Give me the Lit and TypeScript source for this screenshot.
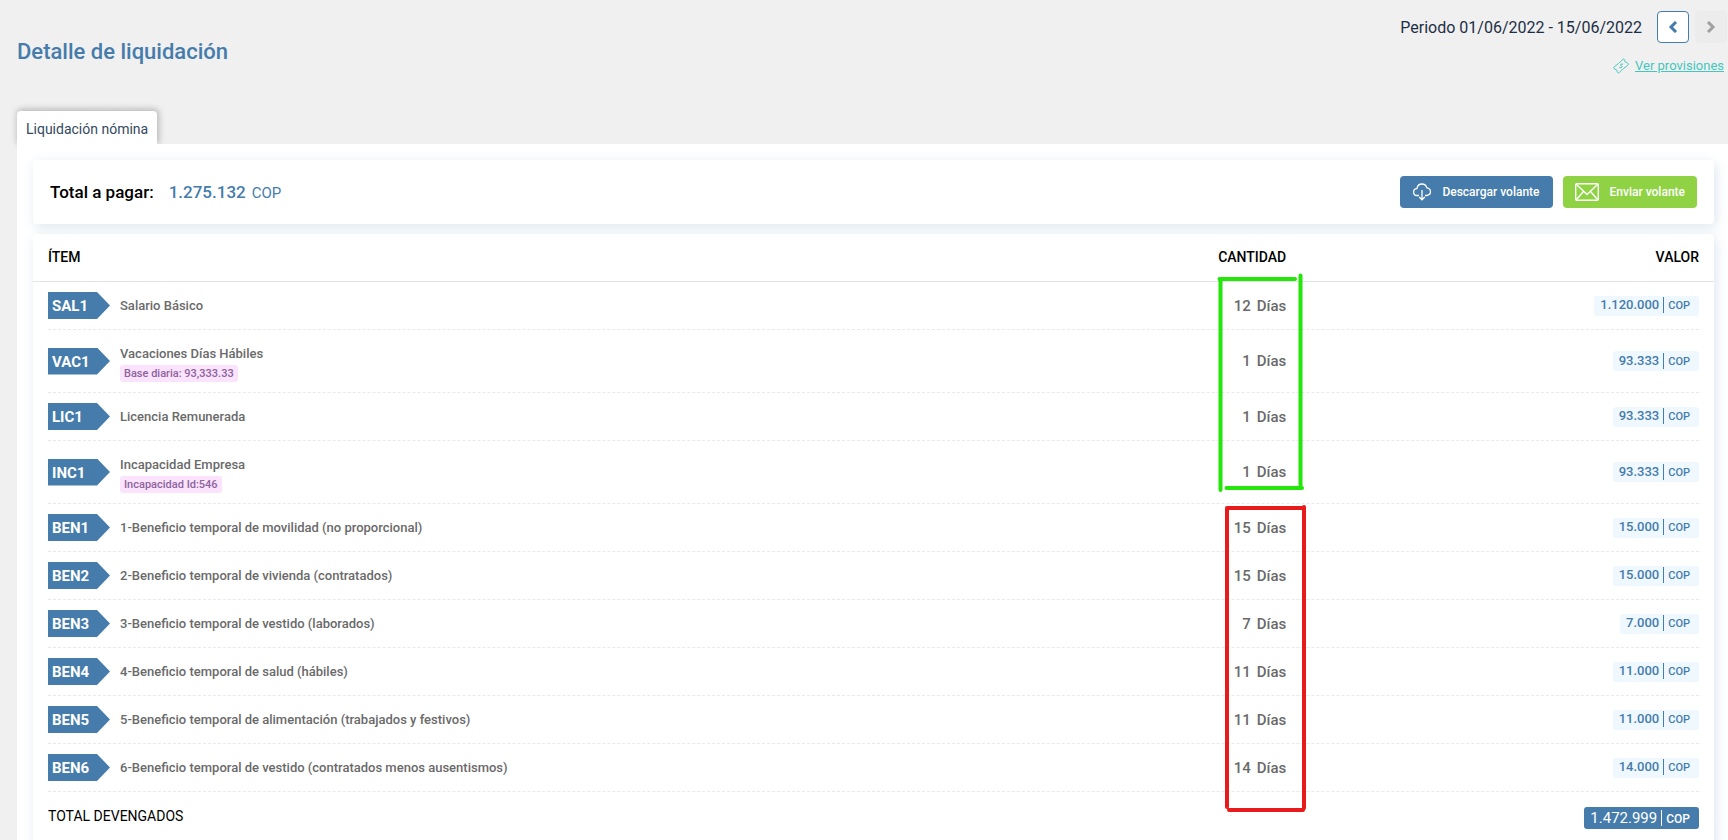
import { LitElement, html, css, svg, nothing } from "lit";
import { customElement } from "lit/decorators.js";

interface Item {
  code: string;
  name: string;
  note?: string;
  days: number;
  value: string;
}

const ITEMS: Item[] = [
  { code: "SAL1", name: "Salario Básico", days: 12, value: "1.120.000" },
  { code: "VAC1", name: "Vacaciones Días Hábiles", note: "Base diaria: 93,333.33", days: 1, value: "93.333" },
  { code: "LIC1", name: "Licencia Remunerada", days: 1, value: "93.333" },
  { code: "INC1", name: "Incapacidad Empresa", note: "Incapacidad Id:546", days: 1, value: "93.333" },
  { code: "BEN1", name: "1-Beneficio temporal de movilidad (no proporcional)", days: 15, value: "15.000" },
  { code: "BEN2", name: "2-Beneficio temporal de vivienda (contratados)", days: 15, value: "15.000" },
  { code: "BEN3", name: "3-Beneficio temporal de vestido (laborados)", days: 7, value: "7.000" },
  { code: "BEN4", name: "4-Beneficio temporal de salud (hábiles)", days: 11, value: "11.000" },
  { code: "BEN5", name: "5-Beneficio temporal de alimentación (trabajados y festivos)", days: 11, value: "11.000" },
  { code: "BEN6", name: "6-Beneficio temporal de vestido (contratados menos ausentismos)", days: 14, value: "14.000" },
];

const chevron = (d: string) => html`
  <svg width="10" height="12" viewBox="0 0 10 12" fill="none" stroke="currentColor" stroke-width="3" aria-hidden="true">
    ${svg`<path d=${d} />`}
  </svg>
`;

@customElement("app-root")
export class AppRoot extends LitElement {
  static styles = css`
    :host {
      display: flex;
      flex-direction: column;
      box-sizing: border-box;
      height: 100vh;
      overflow: hidden;
      background: #f0f0f0;
      color: #6a6a6a;
      font-family: Roboto, "Liberation Sans", sans-serif;
      font-size: 13px;
      font-weight: 500;
      line-height: 16px;
    }
    *, *::before { box-sizing: border-box; }
    svg { display: block; flex: none; }
    header {
      display: flex;
      justify-content: space-between;
      align-items: flex-start;
      padding: 11px 1px 0 17px;
      height: 111px;
      flex: none;
    }
    h1 {
      margin: 26px 0 0;
      font-size: 22px;
      font-weight: 500;
      line-height: 30px;
      color: #457cab;
    }
    .period {
      display: flex;
      flex-direction: column;
      align-items: flex-end;
      gap: 15px;
    }
    .nav { display: flex; align-items: center; gap: 6px; }
    .range {
      margin-right: 9px;
      padding-top: 2px;
      font-size: 16px;
      font-weight: 400;
      line-height: 20px;
      color: #1d2f45;
    }
    .step {
      display: flex;
      align-items: center;
      justify-content: center;
      width: 32px;
      height: 32px;
      padding: 0;
      border: 1px solid #457cab;
      border-radius: 4px;
      background: #fff;
      color: #457cab;
    }
    .step:disabled { border-color: #ececec; background: #ececec; color: #a0a0a0; }
    .provisions {
      display: flex;
      align-items: center;
      gap: 6px;
      margin-right: 3px;
      font-size: 13px;
      font-weight: 400;
      color: #45c6bd;
    }
    .tabs { display: flex; padding-left: 17px; flex: none; }
    .tab {
      height: 33px;
      padding: 2px 9px 0;
      border: 0;
      border-radius: 4px 4px 0 0;
      background: #fff;
      box-shadow: 1px -1px 6px 1px rgba(0, 0, 0, 0.24);
      color: #34495e;
      font: 400 14px/20px Roboto, sans-serif;
    }
    main {
      position: relative;
      display: flex;
      flex-direction: column;
      flex: none;
      gap: 10px;
      margin-left: 17px;
      padding: 16px 14px 16px 16px;
      background: #fff;
    }
    .card {
      border-radius: 4px;
      background: #fff;
      box-shadow: 2px 3px 12px rgba(69, 124, 171, 0.18);
    }
    .summary {
      display: flex;
      align-items: center;
      gap: 10px;
      height: 64px;
      padding: 0 17px;
      font-size: 17px;
      line-height: 20px;
    }
    .total-label { color: #000; }
    .total {
      display: flex;
      align-items: baseline;
      gap: 6px;
      margin: 0 auto 0 5px;
      color: #457cab;
    }
    .total small { font-size: 15px; font-weight: 400; }
    .action {
      display: flex;
      align-items: center;
      gap: 11px;
      height: 32px;
      border: 0;
      border-radius: 4px;
      background: #457cab;
      color: #fff;
      font: 500 12px/16px Roboto, sans-serif;
      padding: 0 13px;
    }
    .send { background: #8fd344; padding: 0 12px; }
    .items { position: relative; }
    table { display: block; }
    thead, tbody, tfoot { display: block; }
    tr { display: grid; grid-template-columns: minmax(0, 2fr) minmax(0, 1fr) minmax(0, 1fr); align-items: center; }
    th, td { display: block; padding: 0; text-align: left; font-weight: inherit; }
    th:nth-child(n + 2), td:nth-child(n + 2) { text-align: right; }
    thead tr {
      height: 48px;
      padding: 0 15px 2px;
      border-bottom: 1px solid #e4e4e4;
      font-size: 14px;
      color: #000;
    }
    tbody { padding: 0 15px; }
    tbody tr { height: 48px; border-bottom: 1px dashed #e9e9e9; }
    tbody tr.tall { height: 63px; }
    .tall .name { padding-top: 6px; }
    .concept { display: flex; align-items: center; gap: 10px; }
    .code {
      width: 62px;
      height: 27px;
      padding-left: 4px;
      background: #457cab;
      clip-path: polygon(0 0, 49px 0, 100% 50%, 49px 100%, 0 100%);
      color: #fff;
      font-size: 15px;
      font-weight: 700;
      line-height: 28px;
    }
    .note {
      display: block;
      width: max-content;
      margin-top: 3px;
      padding: 0 4px;
      border-radius: 3px;
      background: #fbe2fd;
      color: #8d649c;
      font-size: 11px;
      line-height: 17px;
    }
    .days { display: flex; justify-content: flex-end; gap: 6px; font-size: 15px; }
    .money {
      display: inline-flex;
      align-items: center;
      height: 20px;
      padding: 0 9px 1px 6px;
      border-radius: 3px;
      background: #f0f8ff;
      color: #457cab;
    }
    .money small {
      margin-left: 4px;
      padding: 2px 0 0 4px;
      border-left: 1px solid currentColor;
      font-size: 11px;
      line-height: 14px;
    }
    tfoot tr { height: 64px; padding: 0 15px; align-items: start; }
    tfoot th { padding-top: 16px; font-size: 14px; font-weight: 400; color: #000; }
    tfoot td { padding-top: 15px; }
    .money.sum { height: 22px; background: #457cab; color: #fff; font-size: 15px; font-weight: 400; }
    .money.sum small { font-size: 12px; font-weight: 500; }
    .marks {
      position: absolute;
      top: 34px;
      left: calc(75% - 78px);
      pointer-events: none;
    }
  `;

  private money(value: string, extra = "") {
    return html`<span class="money ${extra}">${value}<small>COP</small></span>`;
  }

  private row(item: Item) {
    return html`
      <tr class=${item.note ? "tall" : ""}>
        <td class="concept">
          <span class="code">${item.code}</span>
          <span class="name">${item.name}${item.note ? html`<span class="note">${item.note}</span>` : nothing}</span>
        </td>
        <td><span class="days"><span>${item.days}</span><span>Días</span></span></td>
        <td>${this.money(item.value)}</td>
      </tr>
    `;
  }

  render() {
    return html`
      <header>
        <h1>Detalle de liquidación</h1>
        <div class="period">
          <div class="nav">
            <span class="range">Periodo 01/06/2022 - 15/06/2022</span>
            <button class="step" aria-label="Periodo anterior">${chevron("M8 1 3 6l5 5")}</button>
            <button class="step" aria-label="Periodo siguiente" disabled>${chevron("M2 1l5 5-5 5")}</button>
          </div>
          <a class="provisions" href="#provisiones">
            <svg width="16" height="16" viewBox="0 0 16 16" fill="none" stroke="currentColor" aria-hidden="true">
              <path d="M10.500.8l1.300 1.500c-.3 1.400.9 2.400 2.200 2.200l1.500 1.700c-1.500 2.300-3 2.600-4.700 4.200-1.700 1.700-3 2.300-5.300 4.800l-1.400-1.500c.3-1.400-.8-2.500-2.200-2.200L.6 9.800c1.500-2.300 3-2.600 4.700-4.200C7 4 8.200 3.200 10.500.8z" />
              <path d="M9.700 6.600c-1-1-2.700-.3-2.100.8.500.9 1.700.5 1.600 1.500-.1 1-1.700 1.200-2.500.2M9.700 5.600l-.5.800M6.800 9.400l-.5.800" />
            </svg>
            <u>Ver provisiones</u>
          </a>
        </div>
      </header>

      <div class="tabs" role="tablist">
        <button class="tab" role="tab" aria-selected="true">Liquidación nómina</button>
      </div>

      <main>
        <section class="card summary">
          <span class="total-label">Total a pagar:</span>
          <span class="total">1.275.132 <small>COP</small></span>
          <button class="action">
            <svg width="18" height="18" viewBox="0 0 18 18" fill="none" stroke="currentColor" stroke-width="1.300" aria-hidden="true">
              <path d="M6 12.500H4.200a3.400 3.400 0 0 1-.3-6.800C4.300 3 6.300 1 9 1c2.300 0 4.200 1.600 4.900 3.900a3.800 3.800 0 0 1-.4 7.600H12M9 7v9.500M6.200 14 9 16.800l2.800-2.800" />
            </svg>
            Descargar volante
          </button>
          <button class="action send">
            <svg width="24" height="18" viewBox="0 0 24 18" fill="none" stroke="currentColor" stroke-width="1.400" aria-hidden="true">
              <rect x=".7" y=".7" width="22.600" height="16.600" rx="1" />
              <path d="M1.500 1.500 12 11.500l10.500-10M1.500 16.500l7-8M22.500 16.500l-7-8" />
            </svg>
            Enviar volante
          </button>
        </section>

        <section class="card items">
          <table>
            <thead>
              <tr><th scope="col">ÍTEM</th><th scope="col">CANTIDAD</th><th scope="col">VALOR</th></tr>
            </thead>
            <tbody>${ITEMS.map((item) => this.row(item))}</tbody>
            <tfoot>
              <tr><th scope="row">TOTAL DEVENGADOS</th><td></td><td>${this.money("1.472.999", "sum")}</td></tr>
            </tfoot>
          </table>
          <svg class="marks" width="100" height="550" viewBox="1216 268 100 550" fill="none" stroke-width="4" stroke-linecap="round" aria-hidden="true">
            <path stroke="#24e60a" d="M1219.500 279H1295M1220.500 280V490M1300.500 275.500V487M1226.500 488H1302" />
            <path stroke="#e81a1c" d="M1227 508V807M1227 508H1303M1304 507V808M1229 810H1303" />
          </svg>
        </section>
      </main>
    `;
  }
}
